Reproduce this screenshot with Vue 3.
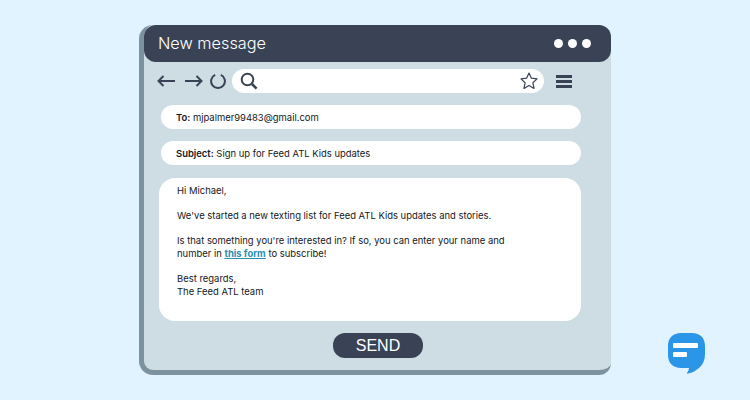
<script setup>
const dots = [1, 2, 3]
</script>

<template>
  <div class="page">
    <div class="window">
      <div class="title-bar">
        <span class="title">New message</span>
        <div class="dots">
          <span class="dot" v-for="d in dots" :key="d"></span>
        </div>
      </div>

      <div class="toolbar">
        <svg class="back" width="18" height="14" viewBox="0 0 18 14" fill="none" stroke="#3a4355" stroke-width="2">
          <path d="M18 7H1.500M6.500 2l-5 5 5 5" />
        </svg>
        <svg class="forward" width="18" height="14" viewBox="0 0 18 14" fill="none" stroke="#3a4355" stroke-width="2">
          <path d="M0 7h16.500M11.500 2l5 5-5 5" />
        </svg>
        <svg class="reload" width="16" height="16" viewBox="0 0 16 16" fill="none" stroke="#3a4355" stroke-width="2">
          <path d="M10.800 1.800a6.900 6.900 0 1 1-5.600 0" />
        </svg>
        <div class="address">
          <svg width="18" height="18" viewBox="0 0 18 18" fill="none" stroke="#3a4355" stroke-width="2">
            <circle cx="7.500" cy="7.500" r="5.800" />
            <path d="m12 12 4.600 4.600" stroke-width="2.600" />
          </svg>
          <svg width="18" height="18" viewBox="0 0 18 18" fill="#fff" stroke="#3a4355" stroke-width="1.200" stroke-linejoin="round">
            <path d="m9 1 2.400 5.200 5.600.7-4.100 3.900 1.100 5.600L9 13.600l-5 2.800 1.100-5.600L1 6.900l5.600-.7z" />
          </svg>
        </div>
        <div class="menu">
          <span></span><span></span><span></span>
        </div>
      </div>

      <div class="field"><b>To:</b> mjpalmer99483@gmail.com</div>
      <div class="field"><b>Subject:</b> Sign up for Feed ATL Kids updates</div>

      <div class="body">
        <p>Hi Michael,</p>
        <p>We've started a new texting list for Feed ATL Kids updates and stories.</p>
        <p>Is that something you're interested in? If so, you can enter your name and<br />number in <a href="#">this form</a> to subscribe!</p>
        <p>Best regards,<br />The Feed ATL team</p>
      </div>

      <button class="send">SEND</button>
    </div>

    <svg class="logo" width="37" height="41" viewBox="0 0 37 41">
      <path d="M13 0h11c8 0 13 5 13 13v8c0 6-2 10.500-6 14-3 2.500-6.500 4.700-11 5.600-1 .2-1.400-.5-.8-1.200 1-1.100 1.600-2.300 1.800-4.400H13C5 35 0 30 0 22v-9C0 5 5 0 13 0z" fill="#2b96e8" />
      <rect x="5" y="10" width="25" height="5" rx="1" fill="#fff" />
      <rect x="5" y="19" width="14" height="5" rx="1" fill="#fff" />
    </svg>
  </div>
</template>

<style scoped>
.page {
  position: relative;
  width: 750px;
  height: 400px;
  box-sizing: border-box;
  padding: 25px 0 0 139px;
  background: #e0f3fe;
  overflow: hidden;
}

.window {
  width: 472px;
  height: 350px;
  box-sizing: border-box;
  display: flex;
  flex-direction: column;
  background: #cedde4;
  border-left: 5px solid #7d929f;
  border-bottom: 5px solid #7d929f;
  border-radius: 14px 12px 12px 14px;
}

.title-bar {
  height: 37px;
  flex: none;
  display: flex;
  align-items: center;
  justify-content: space-between;
  padding: 0 20px 0 14px;
  background: #3a4355;
  border-radius: 12px;
}

.title {
  font-family: Inter, sans-serif;
  font-weight: 300;
  font-size: 16.300px;
  color: #fff;
  margin-top: -1px;
}

.dots {
  display: flex;
  gap: 5px;
}

.dot {
  width: 9px;
  height: 9px;
  border-radius: 50%;
  background: #fff;
}

.toolbar {
  display: flex;
  align-items: center;
  height: 24px;
  margin-top: 7px;
  padding-left: 13px;
}

.back {
  margin-right: 10px;
}

.forward {
  margin-right: 7px;
}

.reload {
  margin-right: 6px;
}

.address {
  width: 312px;
  height: 24px;
  box-sizing: border-box;
  display: flex;
  align-items: center;
  justify-content: space-between;
  padding: 0 6px 0 8px;
  background: #fff;
  border-radius: 12px;
}

.menu {
  display: flex;
  flex-direction: column;
  gap: 2px;
  margin-left: 12px;
}

.menu span {
  width: 16px;
  height: 3px;
  background: #3a4355;
}

.field {
  width: 420px;
  height: 24px;
  box-sizing: border-box;
  margin: 12px 0 0 17px;
  padding: 1px 0 0 15px;
  background: #fff;
  border-radius: 12px;
  font-family: Inter, sans-serif;
  font-size: 9.450px;
  line-height: 23px;
  color: #14171c;
}

.field b {
  font-weight: 600;
}

.body {
  width: 422px;
  height: 143px;
  box-sizing: border-box;
  margin: 13px 0 0 15px;
  padding: 6px 0 0 18px;
  background: #fff;
  border-radius: 16px;
  font-family: Inter, sans-serif;
  font-size: 9.450px;
  line-height: 13px;
  color: #14171c;
}

.body p {
  margin: 0 0 12px;
}

.body a {
  color: #2a8fb0;
  font-weight: 700;
}

.send {
  display: block;
  width: 90px;
  height: 25px;
  flex: none;
  margin: 12px 0 0 189px;
  padding: 0;
  border: none;
  border-radius: 12px;
  background: #3a4355;
  color: #fff;
  font-family: "Liberation Sans", Arial, sans-serif;
  font-size: 16px;
}

.logo {
  position: absolute;
  left: 668px;
  top: 333px;
}
</style>
